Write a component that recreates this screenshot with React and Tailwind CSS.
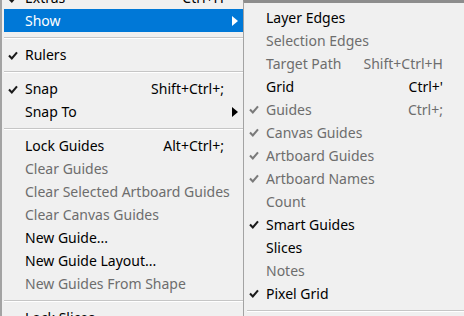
import React from 'react';

const Check = ({ muted }) => (
  <svg width="10" height="9" viewBox="0 0 10 9">
    <path
      d="M1 4.6 L3.8 7.4 L9 1.4"
      fill="none"
      stroke={muted ? '#7a7a7a' : '#1a1a1a'}
      strokeWidth="2.1"
    />
  </svg>
);

const Arrow = ({ white }) => (
  <svg width="6" height="10" viewBox="0 0 6 10">
    <path d="M0 0 L6 5 L0 10 Z" fill={white ? '#ffffff' : '#000000'} />
  </svg>
);

const mainItems = [
  { label: 'Extras', shortcut: 'Ctrl+H', checked: true },
  { label: 'Show', sub: true, active: true },
  { sep: true },
  { label: 'Rulers', checked: true },
  { sep: true },
  { label: 'Snap', shortcut: 'Shift+Ctrl+;', checked: true },
  { label: 'Snap To', sub: true },
  { sep: true },
  { label: 'Lock Guides', shortcut: 'Alt+Ctrl+;' },
  { label: 'Clear Guides', disabled: true },
  { label: 'Clear Selected Artboard Guides', disabled: true },
  { label: 'Clear Canvas Guides', disabled: true },
  { label: 'New Guide...' },
  { label: 'New Guide Layout...' },
  { label: 'New Guides From Shape', disabled: true },
  { sep: true },
  { label: 'Lock Slices' },
];

const showItems = [
  { label: 'Layer Edges' },
  { label: 'Selection Edges', disabled: true },
  { label: 'Target Path', shortcut: 'Shift+Ctrl+H', disabled: true },
  { label: 'Grid', shortcut: "Ctrl+'" },
  { label: 'Guides', shortcut: 'Ctrl+;', disabled: true, checked: true },
  { label: 'Canvas Guides', disabled: true, checked: true },
  { label: 'Artboard Guides', disabled: true, checked: true },
  { label: 'Artboard Names', disabled: true, checked: true },
  { label: 'Count', disabled: true },
  { label: 'Smart Guides', checked: true },
  { label: 'Slices' },
  { label: 'Notes', disabled: true },
  { label: 'Pixel Grid', checked: true },
  { sep: true },
];

const App = () => {
  return (
    <div
      className="w-[464px] h-[316px] overflow-hidden bg-[#f0f0f0] flex text-[14px] leading-none"
      style={{ fontFamily: '"Noto Sans", "Open Sans", sans-serif' }}
    >
      {/* main View menu */}
      <div className="w-[243px] shrink-0 -mt-[14px] border-l-2 border-[#a3a3a3] pl-[2px]">
        {mainItems.map((item, i) =>
          item.sep ? (
            <div key={i} className="h-[11px] flex items-center">
              <div className="w-full border-t border-[#c6c6c6] border-b border-b-white" />
            </div>
          ) : (
            <div
              key={i}
              className={`h-[23px] flex items-center pt-px ${
                item.active ? 'bg-[#0078d7] text-white' : item.disabled ? 'text-[#6d6d6d]' : 'text-black'
              }`}
            >
              <div className="w-[21px] shrink-0 pl-[4px] flex items-center">{item.checked && <Check />}</div>
              <div className="flex-1 min-w-0 whitespace-nowrap">{item.label}</div>
              {item.shortcut && <div className="whitespace-nowrap">{item.shortcut}</div>}
              <div className="w-[19px] shrink-0 pl-[8px] flex items-center">{item.sub && <Arrow white={item.active} />}</div>
            </div>
          )
        )}
      </div>

      {/* Show submenu */}
      <div className="flex-1 border-l border-[#a3a3a3] border-t-[3px] border-t-[#8d8d8d] pt-[3px]">
        {showItems.map((item, i) =>
          item.sep ? (
            <div key={i} className="h-[11px] flex items-center pl-[3px]">
              <div className="w-full border-t border-[#c6c6c6] border-b border-b-white" />
            </div>
          ) : (
            <div
              key={i}
              className={`h-[23px] flex items-center ${item.disabled ? 'text-[#6d6d6d]' : 'text-black'}`}
            >
              <div className="w-[22px] shrink-0 pl-[5px] flex items-center">{item.checked && <Check muted={item.disabled} />}</div>
              <div className="flex-1 whitespace-nowrap">{item.label}</div>
              {item.shortcut && <div className="whitespace-nowrap pr-[21px]">{item.shortcut}</div>}
            </div>
          )
        )}
      </div>
    </div>
  );
};

export default App;
